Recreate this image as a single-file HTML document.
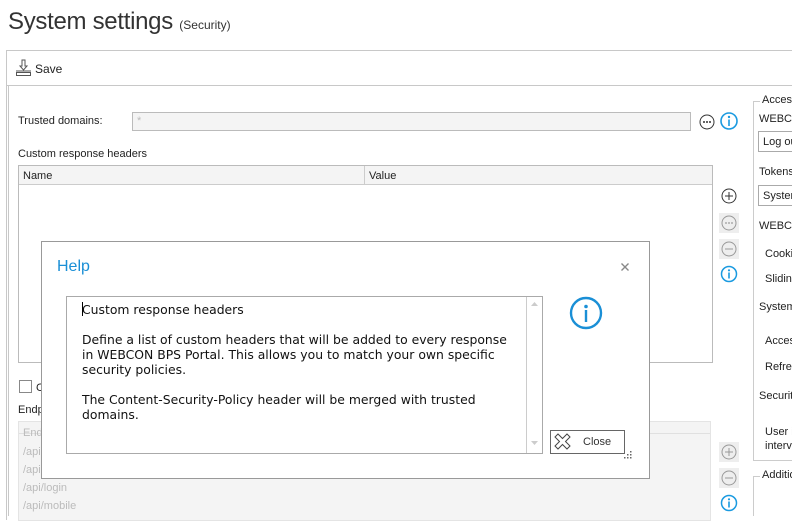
<!DOCTYPE html>
<html><head><meta charset="utf-8">
<style>
*{box-sizing:border-box;margin:0;padding:0}
body{width:792px;height:510px;overflow:hidden;background:#fff;font-family:"Liberation Sans",Tahoma,sans-serif;font-size:11px;color:#222;position:relative}
.a{position:absolute;white-space:nowrap}
.ic{position:absolute}
</style></head><body>
<div class="a" style="left:8px;top:8px;font-size:24px;letter-spacing:-0.3px;color:#333">System settings <span style="font-size:12px;letter-spacing:0">(Security)</span></div>
<!-- outer panel -->
<div class="a" style="left:6px;top:50px;width:800px;height:470px;border:1px solid #c8c8c8;border-right:none;border-bottom:none"></div>
<div class="a" style="left:6px;top:85px;width:800px;height:1px;background:#c8c8c8"></div>
<div class="a" style="left:8px;top:86px;width:1px;height:430px;background:#c8c8c8"></div>
<svg class="ic" style="left:15px;top:59px" width="18" height="18"><path d="M7 1h3v6h2l-3.5 4L5 7h2z" fill="none" stroke="#555"/><rect x="1.5" y="13.5" width="14" height="3" fill="none" stroke="#555"/><path d="M1 12h15" stroke="#555"/></svg>
<div class="a" style="left:35px;top:62px;font-size:12px">Save</div>

<div class="a" style="left:18px;top:115px">Trusted domains:</div>
<div class="a" style="left:132px;top:112px;width:559px;height:19px;border:1px solid #bbb;background:#f4f4f4;color:#bbb;padding:2px 4px">*</div>
<svg class="ic" style="left:698px;top:113px" width="18" height="18"><circle cx="9" cy="9" r="7" fill="none" stroke="#333"/><circle cx="6" cy="9" r="1" fill="#333"/><circle cx="9" cy="9" r="1" fill="#333"/><circle cx="12" cy="9" r="1" fill="#333"/></svg>
<svg class="ic" style="left:719px;top:111px" width="20" height="20"><circle cx="10" cy="10" r="8" fill="none" stroke="#1a9ae0" stroke-width="1.6"/><circle cx="10" cy="6" r="1.2" fill="#1a9ae0"/><rect x="9.2" y="8.5" width="1.6" height="6.5" fill="#1a9ae0"/></svg>

<div class="a" style="left:18px;top:148px">Custom response headers</div>
<div class="a" style="left:18px;top:165px;width:695px;height:198px;border:1px solid #bbb"></div>
<div class="a" style="left:19px;top:166px;width:693px;height:19px;background:#f4f4f4;border-bottom:1px solid #ccc"></div>
<div class="a" style="left:364px;top:166px;width:1px;height:19px;background:#ccc"></div>
<div class="a" style="left:23px;top:170px">Name</div>
<div class="a" style="left:369px;top:170px">Value</div>

<svg class="ic" style="left:720px;top:187px" width="18" height="18"><circle cx="9" cy="9" r="7" fill="none" stroke="#333"/><path d="M5 9h8M9 5v8" stroke="#333"/></svg>
<div class="a" style="left:719px;top:213px;width:20px;height:20px;background:#eee"></div>
<svg class="ic" style="left:720px;top:214px" width="18" height="18"><circle cx="9" cy="9" r="7" fill="none" stroke="#999"/><circle cx="6" cy="9" r=".9" fill="#999"/><circle cx="9" cy="9" r=".9" fill="#999"/><circle cx="12" cy="9" r=".9" fill="#999"/></svg>
<div class="a" style="left:719px;top:239px;width:20px;height:20px;background:#eee"></div>
<svg class="ic" style="left:720px;top:240px" width="18" height="18"><circle cx="9" cy="9" r="7" fill="none" stroke="#999"/><path d="M5 9h8" stroke="#999"/></svg>
<svg class="ic" style="left:719px;top:264px" width="20" height="20"><circle cx="10" cy="10" r="7.5" fill="none" stroke="#1a9ae0" stroke-width="1.5"/><circle cx="10" cy="6.3" r="1.1" fill="#1a9ae0"/><rect x="9.2" y="8.5" width="1.6" height="6" fill="#1a9ae0"/></svg>

<div class="a" style="left:19px;top:380px;width:13px;height:13px;border:1px solid #888"></div>
<div class="a" style="left:36px;top:382px">C</div>
<div class="a" style="left:18px;top:404px">Endp</div>
<div class="a" style="left:18px;top:421px;width:693px;height:100px;background:#f4f4f4;border:1px solid #e4e4e4"></div>
<div class="a" style="left:19px;top:433px;width:691px;height:1px;background:#e0e0e0"></div>
<div class="a" style="left:23px;top:427px;color:#bbb">Endp</div>
<div class="a" style="left:23px;top:446px;color:#bbb">/api</div>
<div class="a" style="left:23px;top:464px;color:#bbb">/api</div>
<div class="a" style="left:23px;top:482px;color:#bbb">/api/login</div>
<div class="a" style="left:23px;top:500px;color:#bbb">/api/mobile</div>
<div class="a" style="left:719px;top:442px;width:20px;height:20px;background:#eee"></div>
<svg class="ic" style="left:720px;top:443px" width="18" height="18"><circle cx="9" cy="9" r="7" fill="none" stroke="#999"/><path d="M5 9h8M9 5v8" stroke="#999"/></svg>
<div class="a" style="left:719px;top:468px;width:20px;height:20px;background:#eee"></div>
<svg class="ic" style="left:720px;top:469px" width="18" height="18"><circle cx="9" cy="9" r="7" fill="none" stroke="#999"/><path d="M5 9h8" stroke="#999"/></svg>
<svg class="ic" style="left:719px;top:493px" width="20" height="20"><circle cx="10" cy="10" r="7.5" fill="none" stroke="#1a9ae0" stroke-width="1.5"/><circle cx="10" cy="6.3" r="1.1" fill="#1a9ae0"/><rect x="9.2" y="8.5" width="1.6" height="6" fill="#1a9ae0"/></svg>

<!-- right group -->
<div class="a" style="left:753px;top:101px;width:60px;height:360px;border:1px solid #ccc;border-right:none"></div>
<div class="a" style="left:760px;top:94px;background:#fff;padding:0 2px">Access</div>
<div class="a" style="left:759px;top:113px">WEBCON</div>
<div class="a" style="left:758px;top:131px;width:40px;height:21px;border:1px solid #aaa;padding:4px 4px">Log out</div>
<div class="a" style="left:759px;top:166px">Tokens</div>
<div class="a" style="left:758px;top:185px;width:40px;height:21px;border:1px solid #aaa;padding:4px 4px">System</div>
<div class="a" style="left:759px;top:220px">WEBCON</div>
<div class="a" style="left:765px;top:248px">Cookie</div>
<div class="a" style="left:765px;top:273px">Sliding</div>
<div class="a" style="left:759px;top:301px">System</div>
<div class="a" style="left:765px;top:335px">Access</div>
<div class="a" style="left:765px;top:361px">Refresh</div>
<div class="a" style="left:759px;top:390px">Security</div>
<div class="a" style="left:765px;top:426px">User i</div>
<div class="a" style="left:765px;top:440px">interval</div>
<div class="a" style="left:753px;top:476px;width:60px;height:40px;border:1px solid #ccc;border-right:none;border-bottom:none"></div>
<div class="a" style="left:760px;top:469px;background:#fff;padding:0 2px">Additional</div>

<!-- dialog -->
<div class="a" style="left:41px;top:241px;width:609px;height:238px;border:1px solid #999;background:#fff"></div>
<div class="a" style="left:57px;top:258px;font-size:16px;color:#1a8fd6">Help</div>
<svg class="ic" style="left:620px;top:262px" width="10" height="10"><path d="M1.5 1.5l7 7M8.5 1.5l-7 7" stroke="#888" stroke-width="1.4"/></svg>
<div class="a" style="left:66px;top:296px;width:477px;height:158px;border:1px solid #aaa"></div>
<div class="a" style="left:526px;top:297px;width:1px;height:156px;background:#ccc"></div>
<svg class="ic" style="left:531px;top:302px" width="7" height="5"><path d="M0 4L3.5 0 7 4z" fill="#ccc"/></svg>
<svg class="ic" style="left:531px;top:441px" width="7" height="5"><path d="M0 0L3.5 4 7 0z" fill="#ccc"/></svg>
<div class="a" style="left:82px;top:302px;width:1px;height:14px;background:#000"></div>
<div class="a" style="left:82px;top:302px;font-family:'DejaVu Sans',Verdana,sans-serif;font-size:12.4px;line-height:15px;color:#111;white-space:pre">Custom response headers

Define a list of custom headers that will be added to every response
in WEBCON BPS Portal. This allows you to match your own specific
security policies.

The Content-Security-Policy header will be merged with trusted
domains.</div>
<svg class="ic" style="left:569px;top:296px" width="34" height="34"><circle cx="17" cy="17" r="15" fill="none" stroke="#1a8fd6" stroke-width="2.4"/><circle cx="17" cy="10.5" r="1.8" fill="#1a8fd6"/><rect x="15.8" y="14" width="2.4" height="12" fill="#1a8fd6"/></svg>
<div class="a" style="left:550px;top:430px;width:75px;height:24px;border:1px solid #666"></div>
<svg class="ic" style="left:554px;top:433px" width="17" height="17"><path d="M4 1L8.5 5.5 13 1 16 4 11.5 8.5 16 13 13 16 8.5 11.5 4 16 1 13 5.5 8.5 1 4z" fill="none" stroke="#444" stroke-width="1"/></svg>
<div class="a" style="left:583px;top:436px;color:#333">Close</div>
<svg class="ic" style="left:621px;top:450px" width="12" height="12"><g fill="#666"><rect x="9" y="1" width="1.5" height="1.5"/><rect x="9" y="4" width="1.5" height="1.5"/><rect x="6" y="4" width="1.5" height="1.5"/><rect x="9" y="7" width="1.5" height="1.5"/><rect x="6" y="7" width="1.5" height="1.5"/><rect x="3" y="7" width="1.5" height="1.5"/></g></svg>
</body></html>
